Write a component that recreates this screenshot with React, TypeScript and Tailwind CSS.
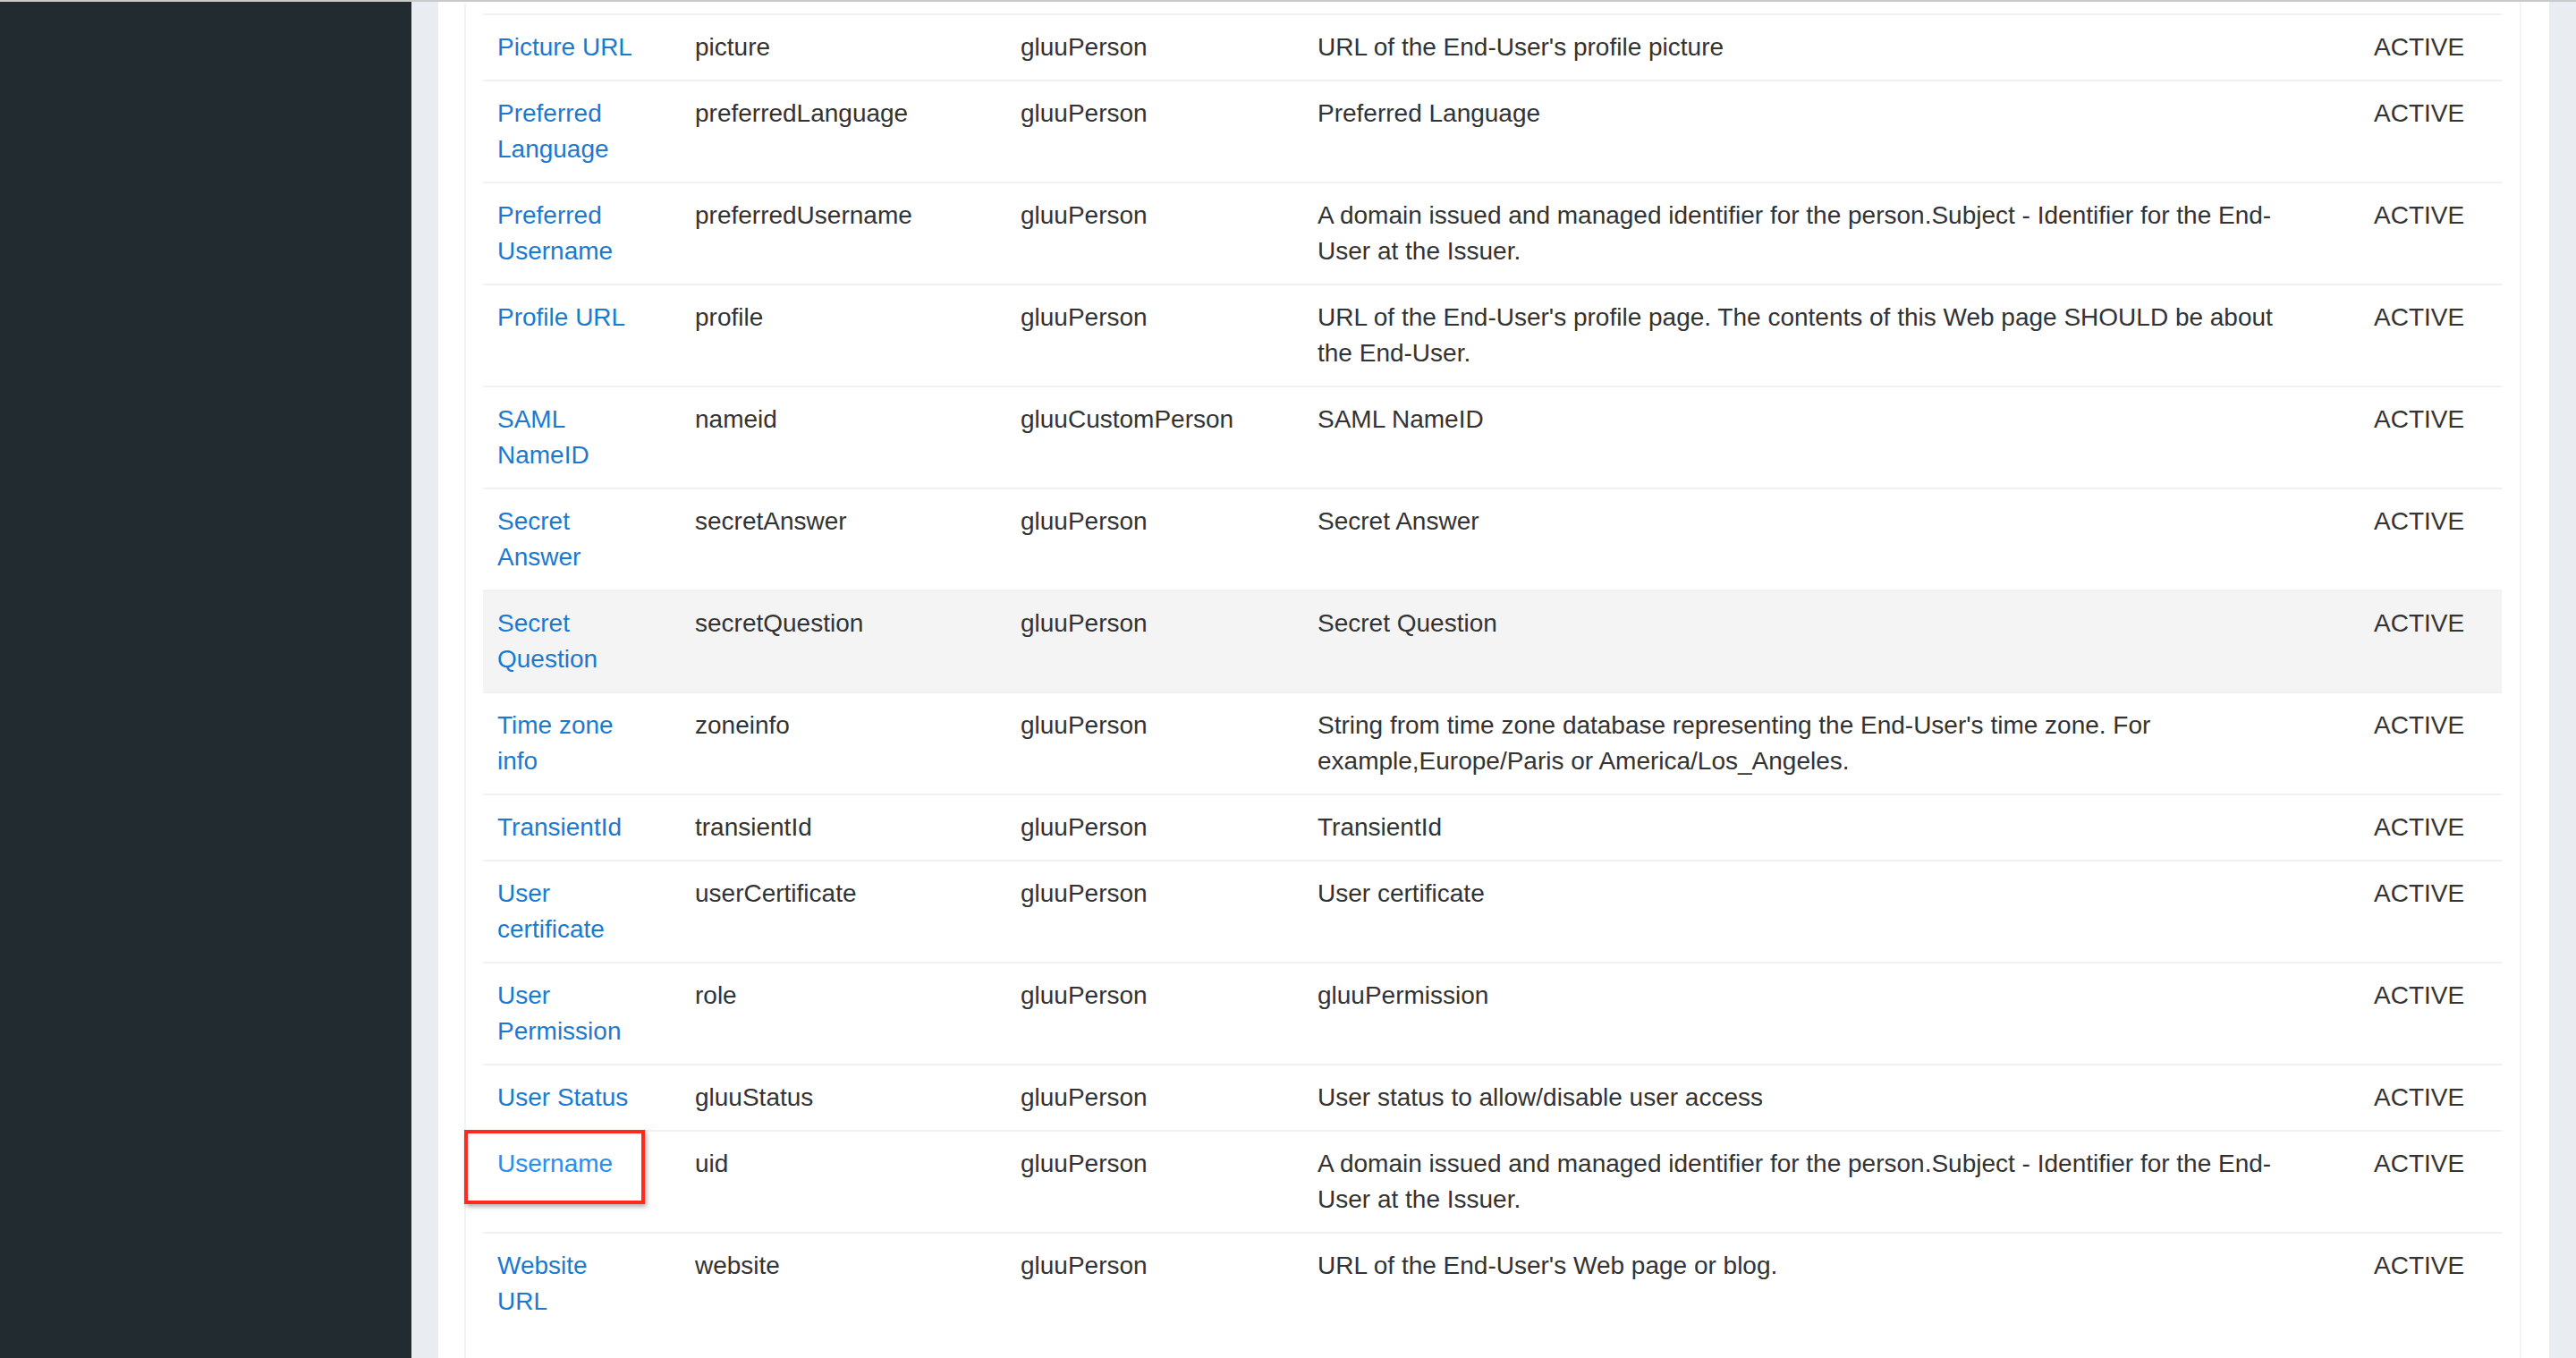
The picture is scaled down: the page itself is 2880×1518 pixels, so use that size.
import React from "react";

type Row = {
  name: string[];
  claim: string;
  origin: string;
  desc: string[];
  hover?: boolean;
  marked?: boolean;
};

const rows: Row[] = [
  { name: ["Picture URL"], claim: "picture", origin: "gluuPerson", desc: ["URL of the End-User's profile picture"] },
  { name: ["Preferred", "Language"], claim: "preferredLanguage", origin: "gluuPerson", desc: ["Preferred Language"] },
  {
    name: ["Preferred", "Username"],
    claim: "preferredUsername",
    origin: "gluuPerson",
    desc: ["A domain issued and managed identifier for the person.Subject - Identifier for the End-", "User at the Issuer."],
  },
  {
    name: ["Profile URL"],
    claim: "profile",
    origin: "gluuPerson",
    desc: ["URL of the End-User's profile page. The contents of this Web page SHOULD be about", "the End-User."],
  },
  { name: ["SAML", "NameID"], claim: "nameid", origin: "gluuCustomPerson", desc: ["SAML NameID"] },
  { name: ["Secret", "Answer"], claim: "secretAnswer", origin: "gluuPerson", desc: ["Secret Answer"] },
  { name: ["Secret", "Question"], claim: "secretQuestion", origin: "gluuPerson", desc: ["Secret Question"], hover: true },
  {
    name: ["Time zone", "info"],
    claim: "zoneinfo",
    origin: "gluuPerson",
    desc: ["String from time zone database representing the End-User's time zone. For", "example,Europe/Paris or America/Los_Angeles."],
  },
  { name: ["TransientId"], claim: "transientId", origin: "gluuPerson", desc: ["TransientId"] },
  { name: ["User", "certificate"], claim: "userCertificate", origin: "gluuPerson", desc: ["User certificate"] },
  { name: ["User", "Permission"], claim: "role", origin: "gluuPerson", desc: ["gluuPermission"] },
  { name: ["User Status"], claim: "gluuStatus", origin: "gluuPerson", desc: ["User status to allow/disable user access"] },
  {
    name: ["Username"],
    claim: "uid",
    origin: "gluuPerson",
    desc: ["A domain issued and managed identifier for the person.Subject - Identifier for the End-", "User at the Issuer."],
    marked: true,
  },
  { name: ["Website", "URL"], claim: "website", origin: "gluuPerson", desc: ["URL of the End-User's Web page or blog."] },
];

function Lines({ lines }: { lines: string[] }) {
  return (
    <>
      {lines.map((l, i) => (
        <React.Fragment key={i}>
          {i > 0 && <br />}
          {l}
        </React.Fragment>
      ))}
    </>
  );
}

export default function App() {
  const cell = "px-4 py-4 align-top whitespace-nowrap border-t-2 border-[#f1f1f1]";

  return (
    <div
      className="w-[2880px] h-[1518px] overflow-hidden flex flex-col bg-[#e9edf2]"
      style={{ fontFamily: '"Liberation Sans", Arial, sans-serif' }}
    >
      <div className="h-[2px] bg-[#c9c9c9] shrink-0" />
      <div className="flex flex-1 min-h-0">
        <aside className="w-[460px] shrink-0 bg-[#222b30]" />
        <main className="flex-1 px-[30px] min-h-0">
          <div className="h-full bg-white pl-[29px] pr-[31px]">
            <div className="h-full border-x-2 border-[#f4f4f4] px-[19px]">
              <div className="h-[13px]" />
              <table className="w-[2257px] table-fixed text-[28px] leading-[40px] text-[#333]">
                <colgroup>
                  <col className="w-[221px]" />
                  <col className="w-[364px]" />
                  <col className="w-[332px]" />
                  <col className="w-[1181px]" />
                  <col className="w-[159px]" />
                </colgroup>
                <tbody>
                  {rows.map((r, i) => (
                    <tr key={i} className={r.hover ? "bg-[#f4f4f4]" : ""}>
                      <td className={`${cell} relative`}>
                        {r.marked ? (
                          <>
                            <span className="text-[#2a8df0]">
                              <Lines lines={r.name} />
                            </span>
                            <span className="absolute left-[-21px] top-[-2px] w-[202px] h-[83px] border-4 border-[#ff2a1c] shadow-[2px_3px_5px_rgba(0,0,0,0.3)]" />
                          </>
                        ) : (
                          <span className="text-[#1b7acf]">
                            <Lines lines={r.name} />
                          </span>
                        )}
                      </td>
                      <td className={cell}>{r.claim}</td>
                      <td className={cell}>{r.origin}</td>
                      <td className={cell}>
                        <Lines lines={r.desc} />
                      </td>
                      <td className={cell}>ACTIVE</td>
                    </tr>
                  ))}
                </tbody>
              </table>
            </div>
          </div>
        </main>
      </div>
    </div>
  );
}
